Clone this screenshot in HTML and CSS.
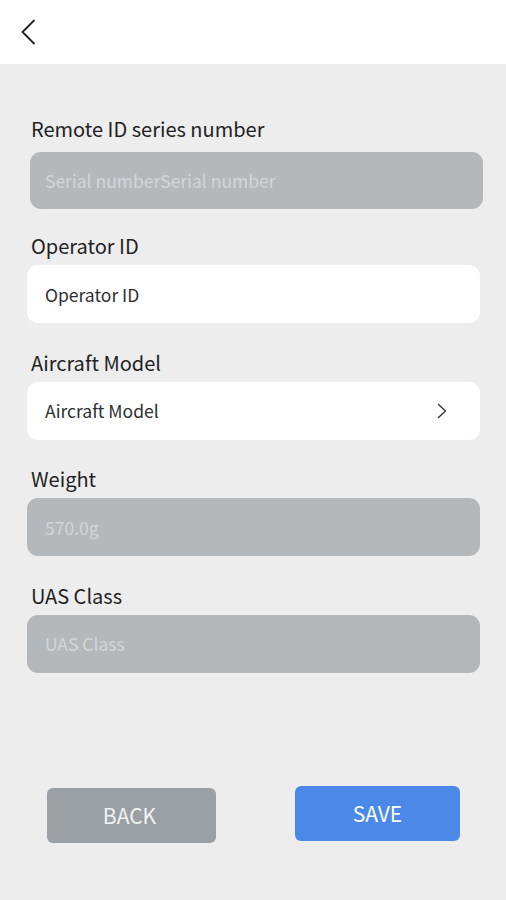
FILE: index.html
```html
<!DOCTYPE html>
<html lang="en">
<head>
  <meta charset="UTF-8">
  <title>Remote ID</title>
  <link rel="stylesheet" href="styles.css">
</head>
<body>
  <div class="top-bar">
    <button class="back-icon" aria-label="Back">
      <svg width="16" height="26" viewBox="0 0 16 26">
        <path d="M14 1.5 L2.5 13 L14 24.5" fill="none" stroke="#222" stroke-width="1.8" stroke-linecap="round" stroke-linejoin="round"/>
      </svg>
    </button>
  </div>

  <div class="form">
    <div class="group first">
      <div class="label">Remote ID series number</div>
      <div class="field disabled">Serial numberSerial number</div>
    </div>
    <div class="group">
      <div class="label">Operator ID</div>
      <div class="field">Operator ID</div>
    </div>
    <div class="group">
      <div class="label">Aircraft Model</div>
      <div class="field select">
        <span>Aircraft Model</span>
        <svg width="10" height="16" viewBox="0 0 10 16">
          <path d="M1.5 1.5 L8.5 8 L1.5 14.5" fill="none" stroke="#333" stroke-width="1.4" stroke-linecap="round" stroke-linejoin="round"/>
        </svg>
      </div>
    </div>
    <div class="group">
      <div class="label">Weight</div>
      <div class="field disabled">570.0g</div>
    </div>
    <div class="group">
      <div class="label">UAS Class</div>
      <div class="field disabled">UAS Class</div>
    </div>
  </div>

  <div class="actions">
    <button class="btn btn-back">BACK</button>
    <button class="btn btn-save">SAVE</button>
  </div>
</body>
</html>
```

FILE: styles.css
```css
body {
  margin: 0;
  height: 900px;
  background: #ededed;
  font-family: 'Noto Sans CJK SC', 'Noto Sans', sans-serif;
  color: #1f1f24;
  overflow: hidden;
}
.top-bar {
  height: 64px;
  background: #fff;
  display: flex;
  align-items: center;
  padding-left: 20px;
}
.back-icon {
  background: none;
  border: none;
  padding: 0;
  width: 20px;
  height: 28px;
  display: flex;
  align-items: center;
  margin-top: -1px;
}
.form {
  padding: 53px 26px 0 27px;
}
.group {
  margin-bottom: 27.5px;
}
.group.first {
  margin-bottom: 25px;
}
.label {
  font-size: 20px;
  line-height: 24px;
  margin-bottom: 7px;
  padding-left: 4px;
}
.first .label {
  margin-bottom: 11px;
}
.field {
  height: 58px;
  border-radius: 11px;
  background: #fff;
  display: flex;
  align-items: center;
  padding: 0 18px;
  font-size: 17.5px;
  color: #2e2e33;
}
.first .field {
  height: 57px;
  margin: 0 -3px 0 3px;
  padding-left: 15px;
}
.field.disabled {
  background: #b5b8ba;
  color: #d3d6d8;
}
.select {
  justify-content: space-between;
  padding-right: 33px;
}
.actions {
  display: flex;
  justify-content: space-between;
  padding: 0 46px 0 47px;
  margin-top: 113px;
}
.btn {
  border: none;
  border-radius: 6px;
  color: #fff;
  font-family: 'Noto Sans CJK SC', 'Noto Sans', sans-serif;
  font-size: 21px;
  height: 55px;
}
.btn-back {
  width: 169px;
  margin-top: 2px;
  padding-right: 10px;
  background: #9aa0a3;
  color: #f1f3f4;
}
.btn-save {
  width: 165px;
  background: #4a89e8;
}
```
